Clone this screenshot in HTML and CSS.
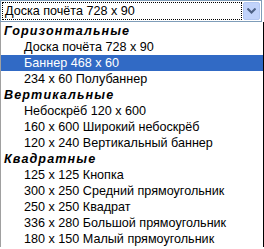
FILE: index.html
```html
<!DOCTYPE html>
<html>
<head>
  <meta charset="utf-8">
  <title>Формат баннера</title>
  <link rel="stylesheet" href="styles.css">
</head>
<body>
  <div class="combo">
    <div class="select">
      <span class="select-value">Доска почёта 728 x 90</span>
      <span class="select-arrow">
        <svg viewBox="0 0 9 6" width="9" height="6">
          <path d="M0.5 0.5 L4.5 4.5 L8.5 0.5" fill="none" stroke="#4D6185" stroke-width="2"/>
        </svg>
      </span>
    </div>

    <ul class="list">
      <li class="group">Горизонтальные</li>
      <li class="option">Доска почёта 728 x 90</li>
      <li class="option selected">Баннер 468 x 60</li>
      <li class="option">234 x 60 Полубаннер</li>
      <li class="group">Вертикальные</li>
      <li class="option">Небоскрёб 120 x 600</li>
      <li class="option">160 x 600 Широкий небоскрёб</li>
      <li class="option">120 x 240 Вертикальный баннер</li>
      <li class="group">Квадратные</li>
      <li class="option">125 x 125 Кнопка</li>
      <li class="option">300 x 250 Средний прямоугольник</li>
      <li class="option">250 x 250 Квадрат</li>
      <li class="option">336 x 280 Большой прямоугольник</li>
      <li class="option">180 x 150 Малый прямоугольник</li>
    </ul>
  </div>
</body>
</html>
```

FILE: styles.css
```css
:root {
  --border: #7F9DB9;
  --highlight: #316AC5;
  --arrow-bg: #C1D3FB;
  --arrow-border: #B4C8F2;
  --text: #000000;
}

* {
  margin: 0;
  padding: 0;
  box-sizing: border-box;
}

body {
  width: 264px;
  height: 249px;
  overflow: hidden;
  background: #FFFFFF;
  font-family: 'Liberation Sans', Arial, sans-serif;
  font-size: 12.6px;
  color: var(--text);
}

.combo {
  width: 264px;
}

.select {
  width: 262px;
  height: 22px;
  border: 1px solid var(--border);
  background: #FFFFFF;
  display: flex;
  align-items: stretch;
  padding: 1px;
  gap: 1px;
}

.select-value {
  flex: 1;
  border: 1px dotted #000000;
  padding-left: 2px;
  display: flex;
  align-items: center;
  white-space: nowrap;
  overflow: hidden;
}

.select-arrow {
  width: 17px;
  background: var(--arrow-bg);
  border: 1px solid var(--arrow-border);
  border-radius: 2px;
  display: flex;
  align-items: center;
  justify-content: center;
}

.list {
  list-style: none;
  border-right: 1px solid #000000;
  border-left: 1px solid #A0A0A0;
  padding-top: 1px;
}

.list li {
  height: 16px;
  line-height: 16px;
  white-space: nowrap;
}

.group {
  padding-left: 3px;
  font-weight: bold;
  font-style: italic;
  letter-spacing: 1.1px;
}

.option {
  padding-left: 23px;
}

.option.selected {
  background: var(--highlight);
  color: #FFFFFF;
}
```
